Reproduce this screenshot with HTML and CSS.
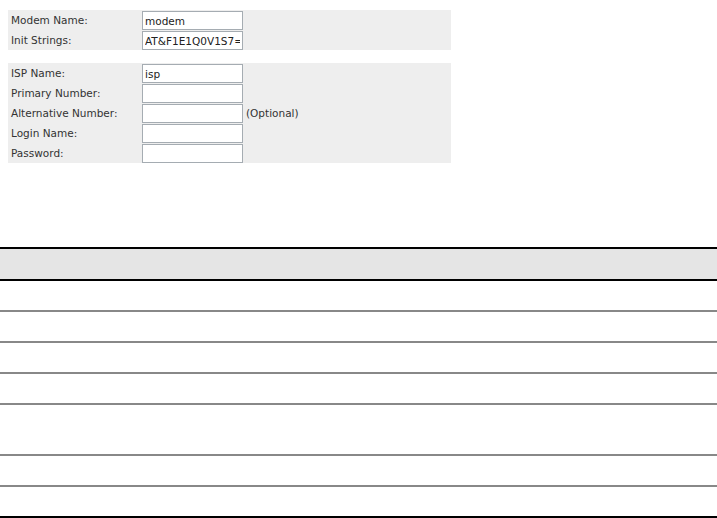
FILE: index.html
```html
<!DOCTYPE html>
<html>
<head>
<meta charset="utf-8">
<link rel="stylesheet" href="styles.css">
</head>
<body>
<div class="form">
  <div class="panel">
    <div class="row"><span class="label">Modem Name:</span><input class="field" type="text" value="modem"></div>
    <div class="row"><span class="label">Init Strings:</span><input class="field" type="text" value="AT&amp;F1E1Q0V1S7="></div>
  </div>
  <div class="panel panel-second">
    <div class="row"><span class="label">ISP Name:</span><input class="field" type="text" value="isp"></div>
    <div class="row"><span class="label">Primary Number:</span><input class="field" type="text" value=""></div>
    <div class="row"><span class="label">Alternative Number:</span><input class="field" type="text" value=""><span class="note">(Optional)</span></div>
    <div class="row"><span class="label">Login Name:</span><input class="field" type="text" value=""></div>
    <div class="row"><span class="label">Password:</span><input class="field" type="password" value=""></div>
  </div>
</div>
<div class="table">
  <div class="trow head"></div>
  <div class="trow"></div>
  <div class="trow"></div>
  <div class="trow"></div>
  <div class="trow"></div>
  <div class="trow tall"></div>
  <div class="trow"></div>
  <div class="trow last"></div>
</div>
</body>
</html>
```
FILE: styles.css
```css
html, body {
  margin: 0;
  padding: 0;
  background: #ffffff;
}
body {
  font-family: "DejaVu Sans", Verdana, sans-serif;
  font-size: 10.5px;
  color: #333333;
  width: 717px;
  height: 518px;
  overflow: hidden;
}
.form {
  padding: 10px 0 0 8px;
  display: flex;
  flex-direction: column;
  gap: 13px;
}
.panel {
  width: 443px;
  background: #eeeeee;
  display: flex;
  flex-direction: column;
}
.row {
  height: 20px;
  display: flex;
  align-items: center;
}
.label {
  width: 131px;
  padding-left: 3px;
  line-height: 20px;
}
.field {
  box-sizing: border-box;
  width: 101px;
  height: 19px;
  margin: 1px 0 0 0;
  align-self: flex-start;
  padding: 0 2px;
  border: 1px solid #a5acb2;
  background: #ffffff;
  font-family: "DejaVu Sans", Verdana, sans-serif;
  font-size: 10.5px;
  color: #222222;
  outline: none;
}
.note {
  margin-left: 3px;
}
.table {
  margin-top: 84px;
  width: 717px;
  display: flex;
  flex-direction: column;
}
.trow {
  height: 29px;
  border-bottom: 2px solid #888888;
}
.trow.head {
  height: 30px;
  background: #e5e5e5;
  border-top: 2px solid #000000;
  border-bottom: 2px solid #000000;
}
.trow.tall {
  height: 49px;
}
.trow.last {
  border-bottom-color: #000000;
}
```
